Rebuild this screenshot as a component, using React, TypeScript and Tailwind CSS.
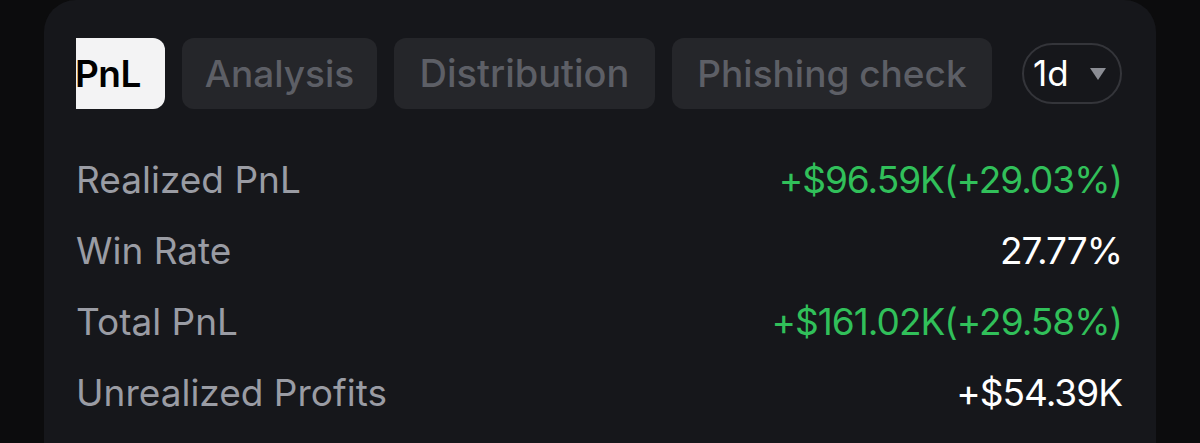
import React from "react";

const rows = [
  { label: "Realized PnL", value: "+$96.59K(+29.03%)", green: true },
  { label: "Win Rate", value: "27.77%", green: false },
  { label: "Total PnL", value: "+$161.02K(+29.58%)", green: true },
  { label: "Unrealized Profits", value: "+$54.39K", green: false },
];

export default function App() {
  return (
    <div className="h-[443px] w-[1200px] overflow-hidden bg-[#0c0c0d] px-[44px] font-['Inter',sans-serif]">
      <div className="h-[480px] rounded-t-[32px] bg-[#16171b] pl-[32px] pr-[34px] pt-[38px]">
        <div className="flex items-center whitespace-nowrap">
          <div className="flex h-[71px] w-[89px] items-center rounded-r-[12px] bg-[#f3f3f4] text-[37px] font-semibold tracking-[-0.5px] text-black">
            <span className="-ml-[1px]">PnL</span>
          </div>
          <div className="ml-[17px] flex h-[71px] w-[195px] items-center justify-center rounded-[12px] bg-[#25262a] text-[37px] font-medium text-[#5d5f66]">
            Analysis
          </div>
          <div className="ml-[17px] flex h-[71px] w-[261px] items-center justify-center rounded-[12px] bg-[#25262a] text-[38px] font-medium text-[#5d5f66]">
            Distribution
          </div>
          <div className="ml-[17px] flex h-[71px] w-[320px] items-center justify-center rounded-[12px] bg-[#25262a] text-[37px] font-medium text-[#5d5f66]">
            Phishing check
          </div>
          <div className="ml-auto flex h-[61px] w-[100px] items-center rounded-full border-2 border-[#34353a] pl-[9px]">
            <span className="text-[35px] text-white">1d</span>
            <svg className="ml-[20px]" width="18" height="14" viewBox="0 0 18 14">
              <path d="M1 1 H17 L9 13 Z" fill="#8b8d94" />
            </svg>
          </div>
        </div>
        <div className="mt-[35px] flex flex-col">
          {rows.map((r) => (
            <div key={r.label} className="flex h-[71px] items-center justify-between text-[37px] leading-none">
              <span className="text-[#9a9ca4]">{r.label}</span>
              <span className={(r.green ? "text-[#31c05a]" : "text-white") + " tracking-[-1px]"}>{r.value}</span>
            </div>
          ))}
        </div>
      </div>
    </div>
  );
}
